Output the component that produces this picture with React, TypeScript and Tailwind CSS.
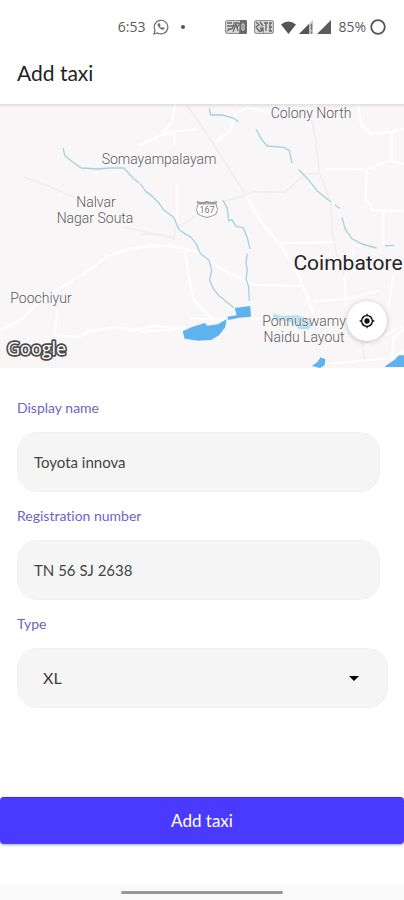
import { useId, type ReactNode } from 'react';

function StatusBar() {
  return (
    <div className="flex h-[54px] items-center justify-end pr-[18px] font-['Open_Sans',sans-serif] text-[14px] leading-5 text-[#5c5c5c]">
      <span>6:53</span>
      <svg viewBox="0 0 16 16" className="ml-2 h-4 w-4 shrink-0" fill="none" stroke="#6b6b6b" aria-hidden="true">
        <path d="M1 15l1-3.8A6.8 6.8 0 1 1 4.7 14z" strokeWidth="1.2" />
        <path d="M5.2 4.4c-.9.9-.5 2.500 1.200 4.300 1.800 1.800 3.600 2.400 4.600 1.400l.6-.8-1.900-1.100-.9.800c-.8-.3-1.700-1.100-2.100-2l.6-.8-.9-1.900z" fill="#6b6b6b" strokeWidth="0.3" />
      </svg>
      <span className="ml-3 h-1 w-1 rounded-full bg-[#555]" />
      <svg viewBox="0 0 22 14" className="ml-10 h-[14px] w-[22px] shrink-0" aria-hidden="true">
        <rect x="0.600" y="0.600" width="20.800" height="12.800" rx="1.500" fill="#dcdcdc" stroke="#888" strokeWidth="1" />
        <path d="M15 0h5.500q1.500 0 1.500 1.500v11q0 1.500-1.500 1.500H14z" fill="#6a6a6a" />
        <path d="M2 3h5M2 6h6M3 9h4M2 11l3-2M9 2v3l-2 4M8 12l3-8 2 7M10 3h4M12 8l3-5" fill="none" stroke="#666" strokeWidth="1.300" />
        <path d="M17 4h2v6h-2z" fill="none" stroke="#ddd" strokeWidth="1" />
      </svg>
      <svg viewBox="0 0 20 14" className="ml-[7px] h-[14px] w-5 shrink-0" aria-hidden="true">
        <rect x="0.600" y="0.600" width="18.800" height="12.800" rx="1.500" fill="#dadada" stroke="#888" strokeWidth="1" />
        <path d="M2 2l3 3-3 2 3 4M6 2l3 4M7 12V8l2 3V7M10 3h4M12 3v8M15 3h3M15 7h3M15 11h3M16 3v8M4 9l2 3" fill="none" stroke="#666" strokeWidth="1.300" />
      </svg>
      <svg viewBox="0 0 15 13" className="ml-[7px] h-[13px] w-[15px] shrink-0" aria-hidden="true">
        <path d="M0 3.500Q7.500-2.500 15 3.500L7.500 13z" fill="#555" />
      </svg>
      <svg viewBox="0 0 14 14" className="ml-[3px] h-[14px] w-[14px] shrink-0" aria-hidden="true">
        <path d="M14 0v14H0z" fill="#c4c4c4" />
        <path d="M10 4v10H0z" fill="#555" />
        <path d="M12.500 4v6M12.500 11.500v2" stroke="#777" strokeWidth="1.200" />
      </svg>
      <svg viewBox="0 0 14 14" className="ml-1 h-[14px] w-[14px] shrink-0" aria-hidden="true">
        <path d="M14 0v14H0z" fill="#5c5c5c" />
      </svg>
      <span className="ml-[7px]">85%</span>
      <svg viewBox="0 0 16 16" className="ml-1 h-4 w-4 shrink-0" aria-hidden="true">
        <circle cx="8" cy="8" r="6.800" fill="none" stroke="#555" strokeWidth="1.800" />
      </svg>
    </div>
  );
}

function MapView() {
  return (
    <section aria-label="Map" className="relative h-[264px] overflow-hidden bg-[#f9f6f8]">
      <svg
        viewBox="0 104 404 264"
        preserveAspectRatio="xMidYMid slice"
        className="block h-full w-full font-[Roboto,sans-serif]"
        role="img"
        aria-label="Map of Coimbatore"
      >
        <g fill="none" stroke="#f0edef" strokeWidth="1.500" strokeLinejoin="round">
          <path d="M24 177l24 9 26 11M124 227l30 7 21 3" />
          <g transform="translate(140 100) scale(.3333)" strokeWidth="5">
            <path d="M140 15l60 85 50 80 68 105M250 305l68-20 20-10 95 2 45-38 22-18 32 0M515 60l12 60 10 95 35 90 6 100 12 60 22 60M0 402l60 2 42 14 4-32 60-38" />
            <path d="M665 715l10 75" />
          </g>
        </g>
        <g fill="none" stroke="#ffffff" strokeWidth="2" strokeLinejoin="round">
          <path d="M0 331l22-12 16-16 24-16 21-13 24-17 20-8 32-4M57 310l-2 26M55 335l23 2 12-6 28-4 15 3 20-4 38 3" />
          <g transform="translate(140 100) scale(.3333)" strokeWidth="6">
            <path d="M0 440l90-3 90 20 60 48 100 50 145 3M135 455l10 70 16 75 60 60M0 695l120-8M150 655l110 5M330 655l300 6" />
            <path d="M105 15l-10 50-30 40-65 30M65 105l45-12 60-5M100 95l6 40M110 250l0 110M225 125l45-30 18-55 32-18 80 18" />
            <path d="M318 285l40 75 60 70 50 80 30 70 24 65M415 430l165-4M520 605l100-8 95-25M614 530l4 90M760 530l-14 90" />
            <path d="M655 15l8 60 30 28 60-8 39-8M755 92l0 90 38 10M755 180l-75 28-130-2M680 210l-4 85 24 35 90 2M730 335l0 100M640 450l0 30" />
            <path d="M575 790l180-15 5-60 32-30M792 750l-38 25M675 740l110-62" />
          </g>
        </g>
        <g fill="none" stroke="#a3d3e0" strokeWidth="1.300" strokeLinejoin="round">
          <path d="M63 148l2 8 9 7 7 5 16 1 13-1 14 0 9 10 6 5" />
          <g transform="translate(140 100) scale(.3333)" strokeWidth="4">
            <path d="M0 250l18 25 20 15 18 18 15 22 30 22 12 28 5 10 35 22 15 18 10 24 5 8 24 18 8 30-6 30 10 25 18 22 45 36" />
            <path d="M248 300l14 25 4 38 10-4 12 20 22 4 12 30 8 34M322 460l-4 28 4 20-4 30 8 22 2 42" />
            <path d="M208 25l4 20 35 0 35 10 12 10M348 88l18 32 16 18 50 4 16 10 8 38M475 208l28 28 28 36 42 34M585 315l14 10M606 352l10 36 20 28 30 16 44 12M735 437l28 0" />
          </g>
        </g>
        <g transform="translate(140 100) scale(.3333)">
          <path d="M284 624l47-6 2 32-36 3-32 7-3-10 28-4z" fill="#5eb3ee" />
          <path d="M128 694l26-12 40-13 8 8 32-4 26-16-4 24-18 24-24 15-40 2-40-6z" fill="#5eb3ee" />
          <path d="M516 798l16-12 10-14 14 6-2 18-14 8zM736 798l30-20 10-12 16 0v35h-58z" fill="#5eb3ee" />
          <path d="M400 640l22 8 50-2 40 12 4 16-10 14-32-2-8-14-30-10-36 0z" fill="#afdff3" />
        </g>
        <g fill="#5a5a5a" fontSize="14" fontWeight="300" textAnchor="middle" stroke="#faf8fa" strokeWidth="1" paintOrder="stroke">
          <text x="311" y="118">Colony North</text>
          <text x="159" y="164">Somayampalayam</text>
          <text x="96" y="207">Nalvar</text>
          <text x="95" y="223">Nagar Souta</text>
          <text x="41" y="303">Poochiyur</text>
          <text x="304" y="326">Ponnuswamy</text>
          <text x="304" y="342">Naidu Layout</text>
        </g>
        <text x="348" y="270" fill="#252525" fontSize="21" textAnchor="middle" stroke="#faf8fa" strokeWidth="1" paintOrder="stroke">
          Coimbatore
        </text>
        <path d="M198 204q-3 6 0 10 3 2 9 3.500 6-1.500 9-3.500 3-4 0-10z" fill="#fff" stroke="#999" strokeWidth="1" />
        <path d="M197 202q5 2 10 0 5 2 10 0" fill="none" stroke="#999" strokeWidth="2" />
        <text x="207" y="213" fill="#777" fontSize="9" textAnchor="middle">167</text>
        <text
          x="7"
          y="355"
          className="font-['Open_Sans',sans-serif]"
          fill="#ffffff"
          stroke="#4c4c4c"
          strokeWidth="3.500"
          strokeLinejoin="round"
          paintOrder="stroke"
          fontSize="18"
          fontWeight="500"
        >
          Google
        </text>
      </svg>
      <div className="pointer-events-none absolute inset-x-0 top-0 h-1 bg-linear-to-b from-black/10 to-transparent" />
      <button
        type="button"
        aria-label="Use my location"
        className="absolute right-[17px] bottom-[27px] flex h-10 w-10 items-center justify-center rounded-full bg-white shadow-[0_1px_5px_rgba(0,0,0,0.25)]"
      >
        <svg viewBox="0 0 24 24" className="h-4 w-4" fill="#111" aria-hidden="true">
          <path d="M12 8a4 4 0 1 0 0 8 4 4 0 0 0 0-8zm8.940 3A8.990 8.990 0 0 0 13 3.060V1h-2v2.060A8.990 8.990 0 0 0 3.060 11H1v2h2.060A8.990 8.990 0 0 0 11 20.940V23h2v-2.060A8.990 8.990 0 0 0 20.940 13H23v-2h-2.060zM12 19a7 7 0 1 1 0-14 7 7 0 0 1 0 14z" />
        </svg>
      </button>
    </section>
  );
}

function Field({ label, children }: { label: string; children: (id: string) => ReactNode }) {
  const id = useId();
  return (
    <div className="flex flex-col gap-4">
      <label htmlFor={id} className="text-[14px] leading-4 text-[#7063c6]">
        {label}
      </label>
      {children(id)}
    </div>
  );
}

function TextField({ label, value }: { label: string; value: string }) {
  return (
    <Field label={label}>
      {(id) => (
        <input
          id={id}
          type="text"
          defaultValue={value}
          className="mr-2 h-[60px] rounded-[20px] border border-[#f2f2f2] bg-[#f5f5f5] px-4 text-[15px] text-[#444] outline-none"
        />
      )}
    </Field>
  );
}

export default function App() {
  return (
    <div className="flex min-h-screen flex-col bg-white font-[Lato,sans-serif] [font-variant-ligatures:no-common-ligatures]">
      <header>
        <StatusBar />
        <div className="flex h-[50px] items-center px-[17px] pb-3">
          <h1 className="text-[21px] leading-7 text-[#222]">Add taxi</h1>
        </div>
      </header>
      <MapView />
      <form className="flex grow flex-col" onSubmit={(e) => e.preventDefault()}>
        <div className="flex flex-col gap-4 pt-8 pr-4 pl-[17px]">
          <TextField label="Display name" value="Toyota innova" />
          <TextField label="Registration number" value="TN 56 SJ 2638" />
          <Field label="Type">
            {(id) => (
              <div className="relative">
                <select
                  id={id}
                  defaultValue="XL"
                  className="h-[60px] w-full appearance-none rounded-[20px] border border-[#f2f2f2] bg-[#f5f5f5] px-[25px] text-[16px] text-[#3c3c3c] outline-none"
                >
                  <option>XL</option>
                </select>
                <svg viewBox="0 0 10 5" className="pointer-events-none absolute top-7 right-[29px] h-[5px] w-[10px]" aria-hidden="true">
                  <path d="M0 0h10L5 5z" fill="#000" />
                </svg>
              </div>
            )}
          </Field>
        </div>
        <button
          type="submit"
          className="mt-auto mb-10 h-[47px] w-full rounded-[4px] border-t border-[#3c30d0] bg-[#4a3aff] text-[17px] text-white shadow-[0_1px_3px_rgba(0,0,0,0.35)]"
        >
          Add taxi
        </button>
      </form>
      <footer className="flex h-4 items-center justify-center bg-[#fafafa]">
        <div className="h-[3px] w-2/5 rounded-full bg-[#979797]" />
      </footer>
    </div>
  );
}
